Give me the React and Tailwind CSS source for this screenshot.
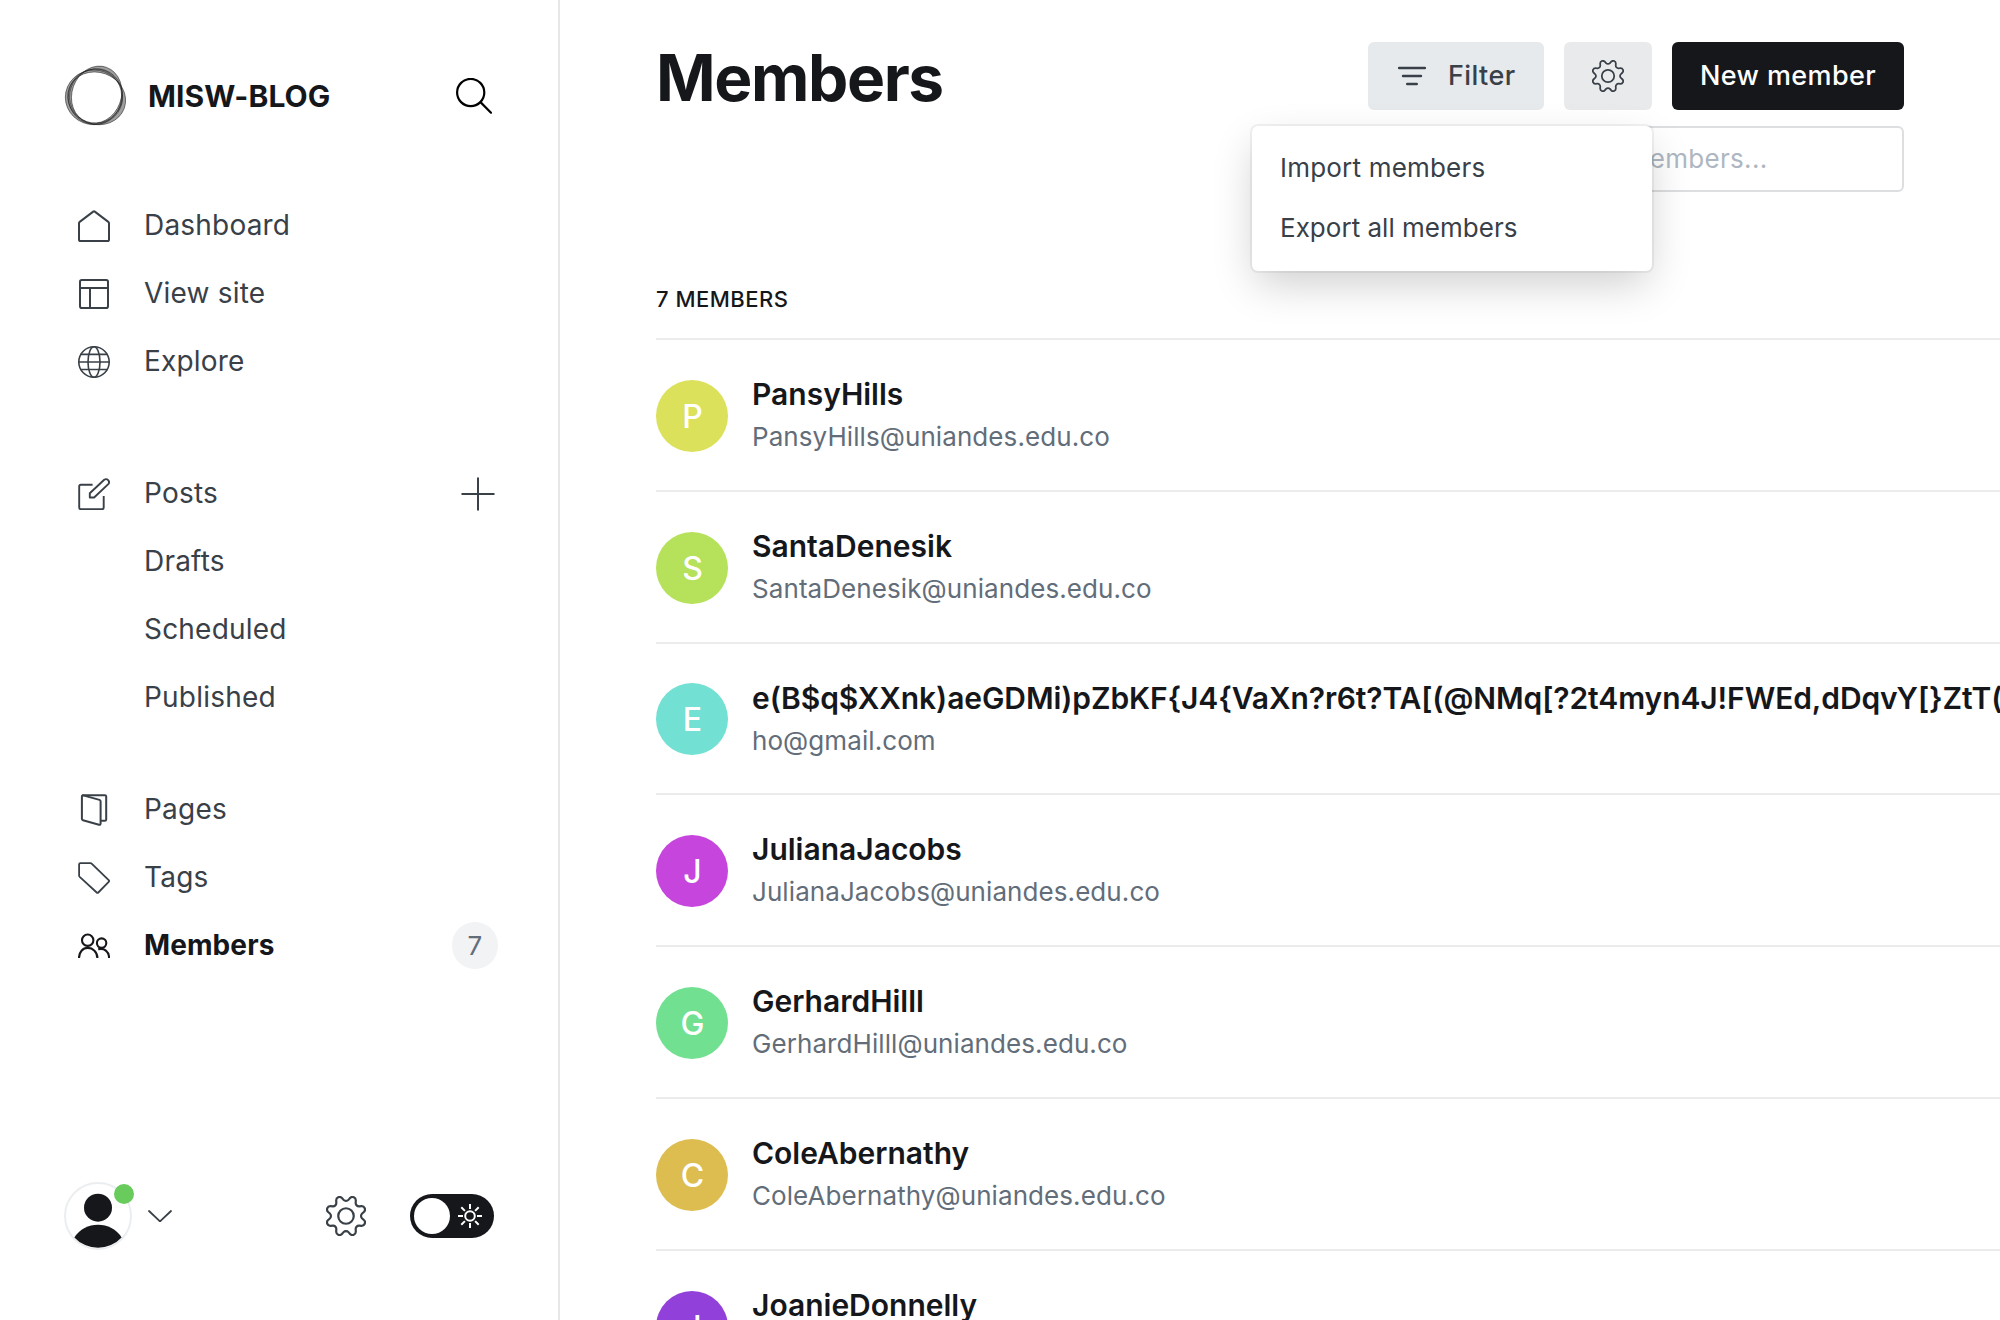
import React from 'react';

const MEMBERS = [
  { name: 'PansyHills', email: 'PansyHills@uniandes.edu.co', initial: 'P', color: 'bg-[#dce15b]' },
  { name: 'SantaDenesik', email: 'SantaDenesik@uniandes.edu.co', initial: 'S', color: 'bg-[#b5e15b]' },
  {
    name: 'e(B$q$XXnk)aeGDMi)pZbKF{J4{VaXn?r6t?TA[(@NMq[?2t4myn4J!FWEd,dDqvY[}ZtT(',
    email: 'ho@gmail.com',
    initial: 'E',
    color: 'bg-[#72e0d3]',
    tracking: 'tracking-[-0.1px]',
  },
  { name: 'JulianaJacobs', email: 'JulianaJacobs@uniandes.edu.co', initial: 'J', color: 'bg-[#c646dd]' },
  { name: 'GerhardHilll', email: 'GerhardHilll@uniandes.edu.co', initial: 'G', color: 'bg-[#72e091]' },
  { name: 'ColeAbernathy', email: 'ColeAbernathy@uniandes.edu.co', initial: 'C', color: 'bg-[#ddbd50]' },
  { name: 'JoanieDonnelly', email: 'JoanieDonnelly@uniandes.edu.co', initial: 'J', color: 'bg-[#9140d9]' },
];

function Svg({ children, className = 'size-8', box = '0 0 32 32', width = 2 }) {
  return (
    <svg
      className={`${className} shrink-0`}
      viewBox={box}
      fill="none"
      stroke="currentColor"
      strokeWidth={width}
      strokeLinecap="round"
      strokeLinejoin="round"
    >
      {children}
    </svg>
  );
}

const HomeIcon = () => (
  <Svg>
    <path d="M1 13.2q0-.8.7-1.3L15.2 1.6q.8-.6 1.6 0l13.5 10.3q.7.5.7 1.3v16.2q0 1.6-1.600 1.6H2.600Q1 31 1 29.400z" />
  </Svg>
);

const SiteIcon = () => (
  <Svg>
    <rect x="2" y="2" width="28" height="28" rx="1.8" />
    <path d="M2 10h28M12 10v20" />
  </Svg>
);

const GlobeIcon = () => (
  <Svg width={1.600}>
    <circle cx="16" cy="16" r="15.200" />
    <ellipse cx="16" cy="16" rx="6" ry="15.200" />
    <path d="M.8 16h30.400M2.800 8.400h26.400M2.800 23.500h26.400" />
  </Svg>
);

const PostIcon = () => (
  <Svg width={1.900}>
    <path strokeLinecap="butt" d="M14.600 6.800H2.800Q1.200 6.800 1.200 8.400v21.200Q1.200 31.200 2.800 31.200h21.300q1.600 0 1.600-1.600V18" />
    <path d="M11.800 19.500v-4.200L26.200 1.800a3 3 0 0 1 4.100 4.300L16.100 19.500z" />
  </Svg>
);

const PagesIcon = () => (
  <Svg>
    <path d="M5.200 1.200h21.600q1.400 0 1.400 1.400v22.800q0 1.400-1.400 1.400H23" />
    <path d="M3.900 2.500v22.300q0 1.100 1.100 1.400l16 4.500q1.600.4 1.600-1.100V7.300q0-1-1.100-1.400L5.300 1.400Q3.900 1.100 3.900 2.500z" />
  </Svg>
);

const TagIcon = () => (
  <Svg width={1.800}>
    <path d="M2.400 1.200h10.100q.8 0 1.400.6L30.700 18.200q.8.8 0 1.600L20.300 30.500q-.8.8-1.600 0L1.700 14.800q-.6-.6-.6-1.400V2.500q0-1.300 1.300-1.300z" />
  </Svg>
);

const MembersIcon = () => (
  <Svg width={2.100}>
    <circle cx="9.700" cy="10.200" r="5.700" />
    <circle cx="23.600" cy="13.100" r="4.700" />
    <path strokeLinecap="butt" d="M1 28c0-6 3.800-10.100 8.800-10.100S19.400 22 19.400 28M20.200 19.300c6-1.800 10.800 2.300 10.900 8.700" />
  </Svg>
);

const GearIcon = ({ className }) => (
  <Svg className={className} box="0.150 0.150 23.700 23.700" width={1.300}>
    <circle cx="12" cy="12" r="4.600" />
    <path d="M10.546 2.438a1.957 1.957 0 0 0 2.908 0l.94-1.042a1.959 1.959 0 0 1 3.410 1.413l-.071 1.400a1.958 1.958 0 0 0 2.056 2.056l1.400-.071a1.959 1.959 0 0 1 1.413 3.410l-1.042.94a1.958 1.958 0 0 0 0 2.908l1.042.94a1.959 1.959 0 0 1-1.413 3.410l-1.400-.071a1.958 1.958 0 0 0-2.056 2.056l.071 1.400a1.959 1.959 0 0 1-3.410 1.413l-.94-1.042a1.958 1.958 0 0 0-2.908 0l-.94 1.042a1.959 1.959 0 0 1-3.410-1.413l.071-1.400a1.958 1.958 0 0 0-2.056-2.056l-1.400.071a1.959 1.959 0 0 1-1.413-3.410l1.042-.94a1.958 1.958 0 0 0 0-2.908l-1.042-.94a1.959 1.959 0 0 1 1.413-3.410l1.400.071a1.958 1.958 0 0 0 2.056-2.056l-.071-1.400a1.959 1.959 0 0 1 3.410-1.413z" />
  </Svg>
);

// Closed path of an ellipse turned by `deg` degrees about its centre.
function ring(cx, cy, rx, ry, deg) {
  const dx = rx * Math.cos((deg * Math.PI) / 180);
  const dy = rx * Math.sin((deg * Math.PI) / 180);
  return `M${cx - dx} ${cy - dy}A${rx} ${ry} ${deg} 1 0 ${cx + dx} ${cy + dy}A${rx} ${ry} ${deg} 1 0 ${cx - dx} ${cy - dy}z`;
}

function Logo() {
  const left = ring(114, 124, 86, 82, 0);
  const top = ring(122, 116, 74, 87, 20);
  const right = ring(122, 127, 88, 78, 20);
  const strands = [ring(117, 122, 80, 83, 10), ring(120, 120, 79, 82, 20)];
  return (
    <svg className="size-20 shrink-0" viewBox="0 0 240 240" fillRule="evenodd">
      <g fill="#222" fillOpacity="0.25">
        <path d={left + top} />
        <path d={left + right} />
        <path d={top + right} />
      </g>
      <g fill="none" stroke="#111" strokeWidth="2.400" strokeOpacity="0.65">
        <path d={left} />
        <path d={top} />
        <path d={right} />
        <path d={strands[0]} />
        <path d={strands[1]} />
      </g>
    </svg>
  );
}

function NavItem({ icon, label, active, children }) {
  return (
    <a className={`flex h-[68px] items-center pl-[78px] pr-[62px] text-[28px] ${active ? 'font-bold tracking-[0.1px] text-[#15171a]' : 'tracking-[0.2px] text-[#394047]'}`}>
      <span className="mr-[34px] flex size-8 pt-[1px]">{icon}</span>
      <span className="flex-1">{label}</span>
      {children}
    </a>
  );
}

function Sidebar() {
  return (
    <nav className="flex w-[560px] shrink-0 flex-col border-r-2 border-[#e6e7e9]">
      <header className="flex h-[191px] items-center pl-14 pr-[66px] pt-[1px]">
        <Logo />
        <span className="ml-3 flex-1 text-[30px] font-bold tracking-[0.1px] text-[#15171a]">MISW-BLOG</span>
        <Svg className="size-9 text-black" box="0 0 36 36" width={2.2}>
          <circle cx="14.700" cy="14.500" r="13.600" />
          <path d="M24.700 24.400 35 34.700" />
        </Svg>
      </header>

      <section>
        <NavItem icon={<HomeIcon />} label="Dashboard" />
        <NavItem icon={<SiteIcon />} label="View site" />
        <NavItem icon={<GlobeIcon />} label="Explore" />
      </section>

      <section className="mt-16">
        <NavItem icon={<PostIcon />} label="Posts">
          <Svg className="mr-[1px] mt-[2px] size-[34px]" box="0 0 34 34" width={2}>
            <path strokeLinecap="butt" d="M.5 17h33M17 .5v33" />
          </Svg>
        </NavItem>
        <NavItem label="Drafts" />
        <NavItem label="Scheduled" />
        <NavItem label="Published" />
      </section>

      <section className="mt-11">
        <NavItem icon={<PagesIcon />} label="Pages" />
        <NavItem icon={<TagIcon />} label="Tags" />
        <NavItem icon={<MembersIcon />} label="Members" active>
          <span className="-mr-[2px] flex h-[47px] w-[46px] items-center justify-center rounded-full bg-[#f1f3f4] text-[26px] font-normal text-[#626d79]">7</span>
        </NavItem>
      </section>

      <footer className="mb-[70px] mt-auto flex items-center pl-16 pr-16 text-[#394047]">
        <div className="relative size-[68px]">
          <svg className="size-[68px]" viewBox="0 0 68 68">
            <circle cx="34" cy="34" r="33" fill="#fff" stroke="#ebeef0" strokeWidth="2" />
            <circle cx="34" cy="25.700" r="14" fill="#15171a" />
            <path d="M10.400 55.400a28.200 28.200 0 0 1 47.200 0A32 32 0 0 1 10.400 55.400z" fill="#15171a" />
          </svg>
          <span className="absolute -right-[2px] top-[2px] size-5 rounded-full bg-[#69cb5b]" />
        </div>
        <Svg className="ml-4 h-3 w-6" box="0 0 24 12" width={1.8}>
          <path d="M1 1l10.200 9.700q.8.700 1.600 0L23 1" />
        </Svg>
        <GearIcon className="ml-auto size-10" />
        <div className="ml-11 flex h-11 w-[84px] items-center justify-between rounded-full bg-[#15171a] pl-1 pr-3 text-white">
          <span className="size-9 rounded-full bg-white" />
          <Svg className="size-6" box="0 0 24 24" width={2}>
            <g strokeLinecap="butt">
              <circle cx="12" cy="12" r="4.800" />
              <path d="M12 0v5M12 19v5M0 12h5M19 12h5M3.300 3.300l3.600 3.600M17.100 17.100l3.600 3.600M3.300 20.700l3.600-3.600M17.100 6.900l3.600-3.600" />
            </g>
          </Svg>
        </div>
      </footer>
    </nav>
  );
}

function MemberRow({ name, email, initial, color, tracking = '' }) {
  return (
    <li className="flex h-[151.8px] items-center border-t-2 border-[#ececed] pt-[2px]">
      <span className={`mr-6 flex size-[72px] shrink-0 items-center justify-center rounded-full pl-[1px] pt-[2px] text-[32px] font-medium text-white ${color}`}>{initial}</span>
      <div className="-mt-[0.8px] whitespace-nowrap">
        <h3 className={`text-[30px] font-semibold leading-[43px] text-[#15171a] ${tracking}`}>{name}</h3>
        <p className="text-[26px] leading-[42px] tracking-[0.08px] text-[#626d79]">{email}</p>
      </div>
    </li>
  );
}

export default function App() {
  return (
    <div className="flex h-[1320px] w-[2000px] overflow-hidden bg-white font-[Inter,sans-serif]">
      <Sidebar />
      <main className="min-w-0 flex-1 overflow-hidden pl-24">
        <header className="flex h-[278px] items-start justify-between pr-24 pt-[42px]">
          <h1 className="text-[64px] font-bold leading-[71px] tracking-[-1.4px] text-[#15171a]">Members</h1>
          <div className="flex flex-col items-end gap-4">
            <div className="flex gap-5 text-[27px] font-medium tracking-[0.4px] text-[#394047]">
              <button className="flex h-[68px] w-44 items-center rounded-md bg-[#e6eaed] pl-[30px]">
                <Svg className="mr-[22px] h-5 w-[28px]" box="0 0 28 20" width={2.400}>
                  <path d="M1 2h26M5 10h18M9.200 18h9.600" />
                </Svg>
                Filter
              </button>
              <div className="relative z-10">
                <button className="flex h-[68px] w-[88px] items-center justify-center rounded-md bg-[#e9eaec]">
                  <GearIcon className="size-8" />
                </button>
                <div className="absolute right-0 top-[84px] w-[400px] rounded-md bg-white pb-[13px] pt-[11px] text-[26px] font-normal tracking-[0.1px] shadow-[0_0_0_2px_rgba(0,0,0,0.05),0_16px_44px_-4px_rgba(0,0,0,0.2)]">
                  <div className="flex h-[60px] items-center px-7 tracking-[0.2px]">Import members</div>
                  <div className="flex h-[61px] items-center px-7 pb-[1px] tracking-[0.02px]">Export all members</div>
                </div>
              </div>
              <button className="flex h-[68px] w-[232px] items-center justify-center rounded-md bg-[#15171a] text-white">New member</button>
            </div>
            <div className="flex h-[66px] w-[430px] items-center rounded-md border-2 border-[#dcdee0] pb-[2px] pl-[55px] text-[26px] tracking-[0.3px] text-[#aeb7c1]">Search members...</div>
          </div>
        </header>

        <h2 className="flex h-[60px] items-start text-[22px] font-medium leading-[42px] tracking-[0.5px] text-[#15171a]">7 MEMBERS</h2>
        <ul>
          {MEMBERS.map((m) => (
            <MemberRow key={m.name} {...m} />
          ))}
        </ul>
      </main>
    </div>
  );
}
